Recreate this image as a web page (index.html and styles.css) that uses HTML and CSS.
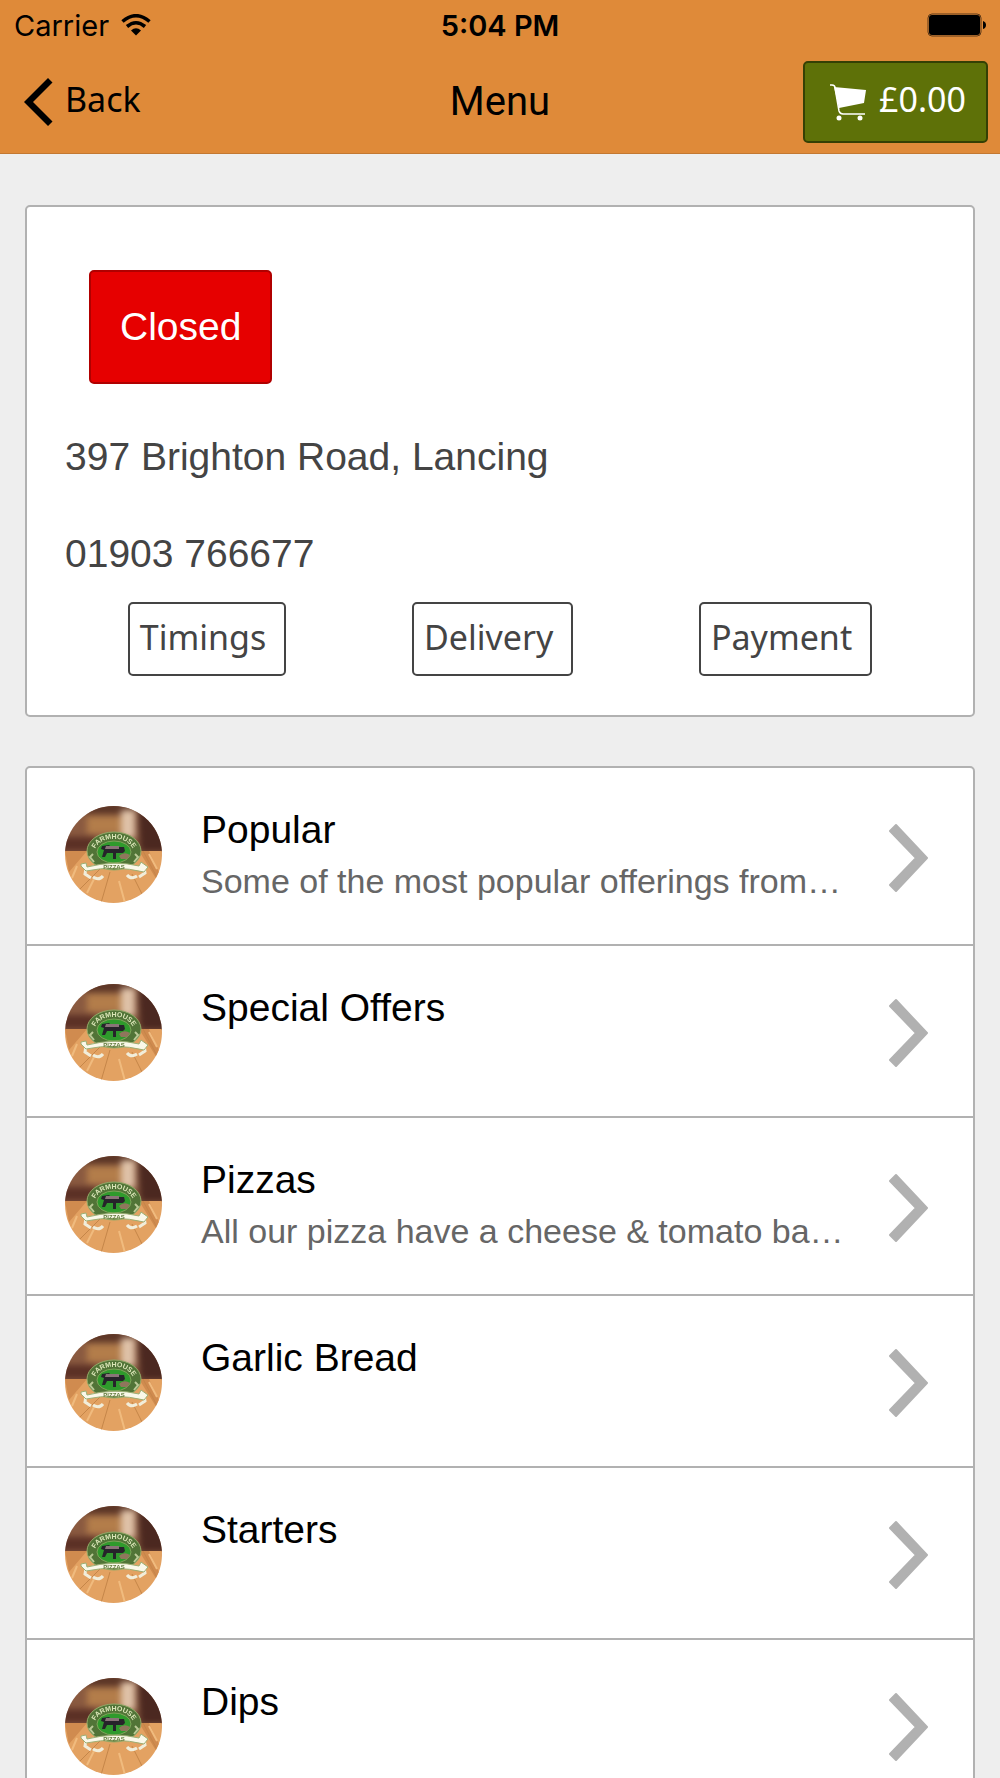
FILE: index.html
```html
<!DOCTYPE html>
<html lang="en">
<head>
  <meta charset="UTF-8" />
  <meta name="viewport" content="width=device-width, initial-scale=1.0"/>
  <title>Menu</title>
  <link rel="stylesheet" href="styles.css">
</head>
<body>
  <!-- shared icons -->
  <svg class="sprite" aria-hidden="true">
    <defs>
      <filter id="soft"><feGaussianBlur stdDeviation="3"/></filter>
      <filter id="softer"><feGaussianBlur stdDeviation="0.5"/></filter>
      <path id="arc" d="M28 52 C28 26 70 26 70 52"/>
    </defs>
    <symbol id="logo" viewBox="0 0 97 97">
      <rect width="97" height="46" fill="#8a5a40"/>
      <g filter="url(#soft)">
        <rect x="20" y="-3" width="50" height="11" fill="#5a3425"/>
        <rect x="22" y="10" width="34" height="18" fill="#b37d4a"/>
        <rect x="-5" y="31" width="36" height="14" fill="#5b3025"/>
        <rect x="56" y="4" width="14" height="28" fill="#dfc2a8"/>
        <path d="M73 0h30v46H75z" fill="#4b2820"/>
      </g>
      <rect y="45" width="97" height="52" fill="#e3a262"/>
      <g filter="url(#softer)">
        <path d="M0 45h22L4 66zM74 45h10l16 34v8z" fill="#d08b4f"/>
        <path d="M38 60L12 86M45 66L36 97M78 45l19 36M67 68l13 26" stroke="#c58649" fill="none"/>
        <path d="M12 60l-5 12M29 73l-7 14M54 75l6 22M84 48l8 15" stroke="#f0bb7e" stroke-width="2" fill="none"/>
        <ellipse cx="49" cy="45" rx="27" ry="19" fill="#517437" stroke="#93aa68"/>
        <ellipse cx="49" cy="46" rx="17" ry="11" fill="#2f9a2c" stroke="#80a35a"/>
        <text class="logo-ring"><textPath href="#arc" startOffset="50%" text-anchor="middle">FARMHOUSE</textPath></text>
        <path d="M37 40l7-1 2 2h13l1 4-2 2h-7v6h-3v-6h-6l-2 4h-3l2-7-3-1z" fill="#26242a"/>
        <path d="M41 40h13v3H40z" fill="#897478"/>
        <path d="M54 50q5-5 11-1l-3 4h-6z" fill="#8f765c"/>
        <path d="M28 48l-3 3 4 5M70 48l3 3-4 5" stroke="#bac996" stroke-width="2" fill="none"/>
        <path d="M21 62l-1 6 6 4M38 70q-4 5-10 1M79 61l1 6-6 4M62 69q4 5 10 1" fill="none" stroke="#f1edda" stroke-width="3"/>
        <path d="M16 58l5-1 1 4q28-7 52-1l2-4 7 5-4 5q-29-7-58-1l-5-5z" fill="#faf8e9" stroke="#9caf75"/>
        <text class="logo-ribbon" x="49" y="63" text-anchor="middle">PIZZAS</text>
      </g>
    </symbol>
    <symbol id="chevron" viewBox="0 0 40 70">
      <path d="M7 2L38 35L7 68L1 62L27 35L1 8z" fill="#b1b1b1" stroke="#b1b1b1" stroke-width="2" stroke-linejoin="round"/>
    </symbol>
  </svg>

  <header class="header">
    <div class="status-bar">
      <div class="carrier">
        <span>Carrier</span>
        <svg class="wifi" viewBox="0 0 30 22" aria-hidden="true">
          <path d="M1.500 7.500Q15-4 28.500 7.500" fill="none" stroke="#000" stroke-width="3.600"/>
          <path d="M6 12.500Q15 5 24 12.500" fill="none" stroke="#000" stroke-width="3.600"/>
          <path d="M10 16.500q5-4.500 10 0L15 21.500z"/>
        </svg>
      </div>
      <div class="time">5:04 PM</div>
      <svg class="battery" viewBox="0 0 59 24" aria-hidden="true">
        <rect x="1" y="1" width="53" height="22" rx="4" fill="none" stroke="#5c3818"/>
        <rect x="2" y="2" width="51" height="20" rx="3"/>
        <path d="M56 8q3 1 3 4t-3 4z"/>
      </svg>
    </div>
    <nav class="nav-bar">
      <a class="back" href="#">
        <svg class="back-icon" viewBox="0 0 29 48" aria-hidden="true">
          <path d="M24 0L28.500 4.500L9 24L28.500 43.500L24 48L0 24z"/>
        </svg>
        <span class="label">Back</span>
      </a>
      <h1>Menu</h1>
      <button class="cart" type="button">
        <svg class="cart-icon" viewBox="0 0 38 38" aria-hidden="true">
          <path d="M1 2h2q3 0 3 3l4 23q1 3 4 3h22" fill="none" stroke="#fff" stroke-width="1.500"/>
          <path d="M5 4l32 3-2 13-25 5z" fill="#fff"/>
          <circle cx="10" cy="35" r="2.500" fill="#fff"/>
          <circle cx="31" cy="35" r="2.500" fill="#fff"/>
        </svg>
        <span class="label">£0.00</span>
      </button>
    </nav>
  </header>

  <main>
    <section class="card info">
      <div class="closed">Closed</div>
      <p>397 Brighton Road, Lancing</p>
      <p>01903 766677</p>
      <div class="info-buttons">
        <button type="button">Timings</button>
        <button type="button">Delivery</button>
        <button type="button">Payment</button>
      </div>
    </section>

    <section class="card menu-list">
      <a class="menu-item" href="#">
        <svg class="avatar" aria-hidden="true"><use href="#logo"/></svg>
        <div class="menu-text">
          <h2>Popular</h2>
          <p>Some of the most popular offerings from…</p>
        </div>
        <svg class="chevron" aria-hidden="true"><use href="#chevron"/></svg>
      </a>
      <a class="menu-item" href="#">
        <svg class="avatar" aria-hidden="true"><use href="#logo"/></svg>
        <div class="menu-text">
          <h2>Special Offers</h2>
        </div>
        <svg class="chevron" aria-hidden="true"><use href="#chevron"/></svg>
      </a>
      <a class="menu-item" href="#">
        <svg class="avatar" aria-hidden="true"><use href="#logo"/></svg>
        <div class="menu-text">
          <h2>Pizzas</h2>
          <p>All our pizza have a cheese &amp; tomato ba…</p>
        </div>
        <svg class="chevron" aria-hidden="true"><use href="#chevron"/></svg>
      </a>
      <a class="menu-item" href="#">
        <svg class="avatar" aria-hidden="true"><use href="#logo"/></svg>
        <div class="menu-text">
          <h2>Garlic Bread</h2>
        </div>
        <svg class="chevron" aria-hidden="true"><use href="#chevron"/></svg>
      </a>
      <a class="menu-item" href="#">
        <svg class="avatar" aria-hidden="true"><use href="#logo"/></svg>
        <div class="menu-text">
          <h2>Starters</h2>
        </div>
        <svg class="chevron" aria-hidden="true"><use href="#chevron"/></svg>
      </a>
      <a class="menu-item" href="#">
        <svg class="avatar" aria-hidden="true"><use href="#logo"/></svg>
        <div class="menu-text">
          <h2>Dips</h2>
        </div>
        <svg class="chevron" aria-hidden="true"><use href="#chevron"/></svg>
      </a>
    </section>
  </main>
</body>
</html>
```

FILE: styles.css
```css
:root {
  --orange: #df8a39;
  --green: #5e7108;
  --red: #e60000;
  --line: #b1b1b1;
  --dark: #444444;
}

* {
  margin: 0;
  padding: 0;
  box-sizing: border-box;
}

html {
  scrollbar-width: none;
}

body {
  font-family: "Liberation Sans", Arial, sans-serif;
  font-size: 39px;
  background: #eeeeee;
  color: #000;
}

a {
  color: inherit;
  text-decoration: none;
}

button {
  font-family: "Noto Sans", sans-serif;
  font-size: 34px;
  cursor: pointer;
}

.sprite {
  display: none;
}

/* header */
.header {
  background: var(--orange);
  border-bottom: 1px solid #c37831;
}

.status-bar,
.nav-bar {
  display: grid;
  grid-template-columns: 1fr auto 1fr;
  align-items: center;
}

.status-bar {
  height: 50px;
  padding: 0 14px;
  font-family: Inter, sans-serif;
  font-size: 29px;
}

.carrier {
  display: flex;
  align-items: center;
  gap: 12px;
}

.wifi {
  width: 30px;
  height: 22px;
}

.time {
  font-weight: 600;
}

.battery {
  width: 59px;
  height: 24px;
  justify-self: end;
}

.nav-bar {
  height: 103px;
  padding: 0 12px;
}

.nav-bar h1 {
  font-family: Roboto, sans-serif;
  font-size: 40px;
  font-weight: 400;
}

.label {
  padding-bottom: 6px;
}

.back {
  display: flex;
  align-items: center;
  gap: 12px;
  padding-left: 12px;
  font-family: "Noto Sans", sans-serif;
  font-size: 34px;
}

.back-icon {
  width: 29px;
  height: 48px;
}

.cart {
  display: flex;
  align-items: center;
  justify-content: center;
  justify-self: end;
  gap: 12px;
  height: 82px;
  padding: 0 20px 0 24px;
  background: var(--green);
  color: #fff;
  border: 2px solid #354004;
  border-radius: 5px;
}

.cart-icon {
  width: 38px;
  height: 38px;
}

/* cards */
main {
  padding: 51px 25px;
}

.card {
  background: #fff;
  border: 2px solid var(--line);
  border-radius: 5px;
  margin-bottom: 49px;
}

.info {
  padding: 63px 38px 39px;
  color: var(--dark);
}

.closed {
  width: fit-content;
  margin: 0 0 24px 24px;
  padding: 0 29px;
  line-height: 110px;
  background: var(--red);
  color: #fff;
  border: 2px solid #b00000;
  border-radius: 5px;
}

.info p {
  line-height: 97px;
}

.info-buttons {
  display: flex;
  justify-content: space-around;
}

.info-buttons button {
  height: 74px;
  padding: 0 18px 4px 10px;
  background: #fff;
  color: var(--dark);
  border: 2px solid var(--dark);
  border-radius: 5px;
}

/* menu list */
.menu-item {
  display: flex;
  align-items: center;
  gap: 39px;
  padding: 38px 44px 35px 38px;
  border-bottom: 2px solid var(--line);
}

.menu-item:last-child {
  border-bottom: none;
}

.avatar {
  flex: none;
  align-self: flex-start;
  width: 97px;
  height: 97px;
  border-radius: 50%;
}

.menu-text {
  flex: 1;
  align-self: flex-start;
  min-width: 0;
}

.menu-text h2 {
  font-size: 39px;
  font-weight: 400;
  line-height: 48px;
}

.menu-text p {
  padding: 3px 0 4px;
  font-size: 34px;
  line-height: 48px;
  color: #666666;
  white-space: nowrap;
}

.chevron {
  flex: none;
  width: 40px;
  height: 70px;
}

.logo-ring {
  font-size: 7px;
  font-weight: 700;
  fill: #dbe5b8;
}

.logo-ribbon {
  font-size: 6px;
  font-weight: 700;
  fill: #637b3e;
}
```
